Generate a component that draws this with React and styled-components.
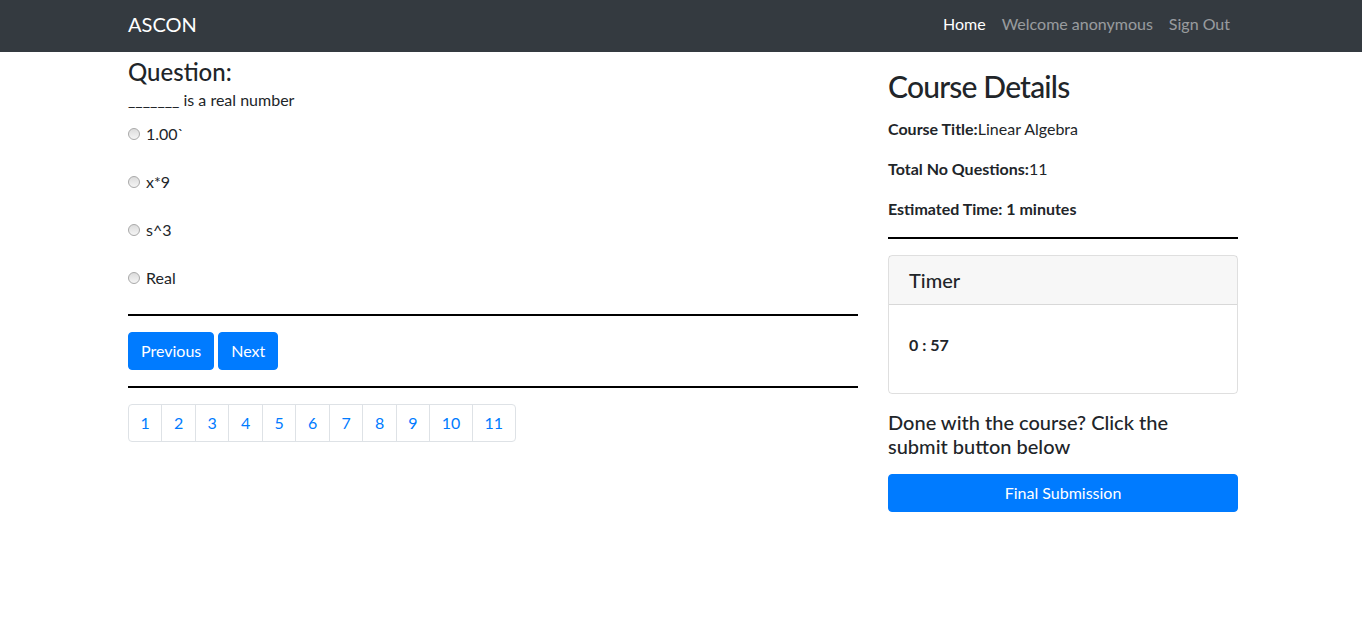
import styled, { createGlobalStyle } from "styled-components"

const GlobalStyle = createGlobalStyle`
body{
  margin:0;
  font-family: Lato, "Open Sans", sans-serif;
  font-size:16px;
  line-height:1.5;
  color:#212529;
  background:#fff;
}
*{ box-sizing:border-box; }
`;

const options = ["1.00`", "x*9", "s^3", "Real"];
const pages = [1, 2, 3, 4, 5, 6, 7, 8, 9, 10, 11];

const App = () => {
  return (
    <>
      <GlobalStyle />
      <Navbar>
        <NavInner>
          <Brand>ASCON</Brand>
          <NavLinks>
            <NavLink active>Home</NavLink>
            <NavLink>Welcome anonymous</NavLink>
            <NavLink>Sign Out</NavLink>
          </NavLinks>
        </NavInner>
      </Navbar>

      <Container>
        <LeftCol>
          <QuestionTitle>Question:</QuestionTitle>
          <QuestionText>_______ is a real number</QuestionText>
          {options.map((o) => (
            <Option key={o}>
              <Radio type="radio" name="answer" />
              <span>{o}</span>
            </Option>
          ))}
          <Rule />
          <ButtonRow>
            <Button>Previous</Button>
            <Button>Next</Button>
          </ButtonRow>
          <Rule />
          <Pagination>
            {pages.map((p) => (
              <PageItem key={p}>{p}</PageItem>
            ))}
          </Pagination>
        </LeftCol>

        <RightCol>
          <Heading>Course Details</Heading>
          <Detail><b>Course Title:</b>Linear Algebra</Detail>
          <Detail><b>Total No Questions:</b>11</Detail>
          <Detail><b>Estimated Time: 1 minutes</b></Detail>
          <Rule />
          <Card>
            <CardHeader>Timer</CardHeader>
            <CardBody>0 : 57</CardBody>
          </Card>
          <DoneText>Done with the course? Click the submit button below</DoneText>
          <BlockButton>Final Submission</BlockButton>
        </RightCol>
      </Container>
    </>
  );
};

export default App;

const Navbar = styled.nav`
background:#343a40;
height:52px;
`;

const NavInner = styled.div`
width:1110px;
margin-left:calc((100% - 1110px) / 2 + 2px);
height:100%;
padding-bottom:4px;
display:flex;
align-items:center;
justify-content:space-between;
`;

const Brand = styled.div`
color:#fff;
font-size:20px;
line-height:30px;
`;

const NavLinks = styled.div`
display:flex;
`;

const NavLink = styled.a`
padding:8px;
color:${(p) => (p.active ? "#fff" : "rgba(255,255,255,.5)")};
cursor:pointer;
`;

const Container = styled.div`
width:1110px;
margin-left:calc((100% - 1110px) / 2 + 2px);
display:grid;
grid-template-columns:730px 350px;
column-gap:30px;
align-items:start;
`;

const LeftCol = styled.div``;
const RightCol = styled.div`
padding-top:16px;
`;

const QuestionTitle = styled.h4`
margin:6px 0 0;
font-size:24px;
font-weight:500;
line-height:1.2;
`;

const QuestionText = styled.div`
margin:1px 0 10px;
`;

const Option = styled.label`
display:flex;
align-items:center;
height:24px;
margin-bottom:24px;
gap:6px;
`;

const Radio = styled.input`
appearance:none;
margin:0;
width:12px;
height:12px;
border-radius:50%;
border:1px solid #a9a9a9;
background:linear-gradient(#dcdcdc, #f5f5f5);
`;

const Rule = styled.hr`
margin:16px 0;
border:0;
border-top:2px solid #000;
`;

const ButtonRow = styled.div`
display:flex;
gap:4px;
`;

const Button = styled.button`
font-family:inherit;
font-size:16px;
line-height:24px;
padding:6px 12px;
color:#fff;
background:#007bff;
border:1px solid #007bff;
border-radius:4px;
`;

const Pagination = styled.div`
display:inline-flex;
border-radius:4px;
`;

const PageItem = styled.a`
padding:8px 11.6px;
line-height:20px;
color:#007bff;
border:1px solid #dee2e6;
margin-left:-1px;
&:first-child{ margin-left:0; border-radius:4px 0 0 4px; }
&:last-child{ border-radius:0 4px 4px 0; }
`;

const Heading = styled.h2`
margin:0 0 13.4px;
font-size:30px;
font-weight:500;
line-height:1.2;
letter-spacing:-0.8px;
`;

const Detail = styled.p`
margin:0 0 16px;
b{ font-weight:700; }
`;

const Card = styled.div`
border:1px solid rgba(0,0,0,.125);
border-radius:4px;
margin-top:16px;
`;

const CardHeader = styled.div`
background:rgba(0,0,0,.03);
border-bottom:1px solid rgba(0,0,0,.125);
padding:12px 20px;
font-size:20px;
font-weight:500;
line-height:24px;
`;

const CardBody = styled.div`
padding:28px 20px 36px;
font-weight:700;
`;

const DoneText = styled.h5`
margin:16px 0 16px;
max-width:310px;
font-size:20px;
font-weight:500;
line-height:24px;
`;

const BlockButton = styled(Button)`
display:block;
width:100%;
`;
